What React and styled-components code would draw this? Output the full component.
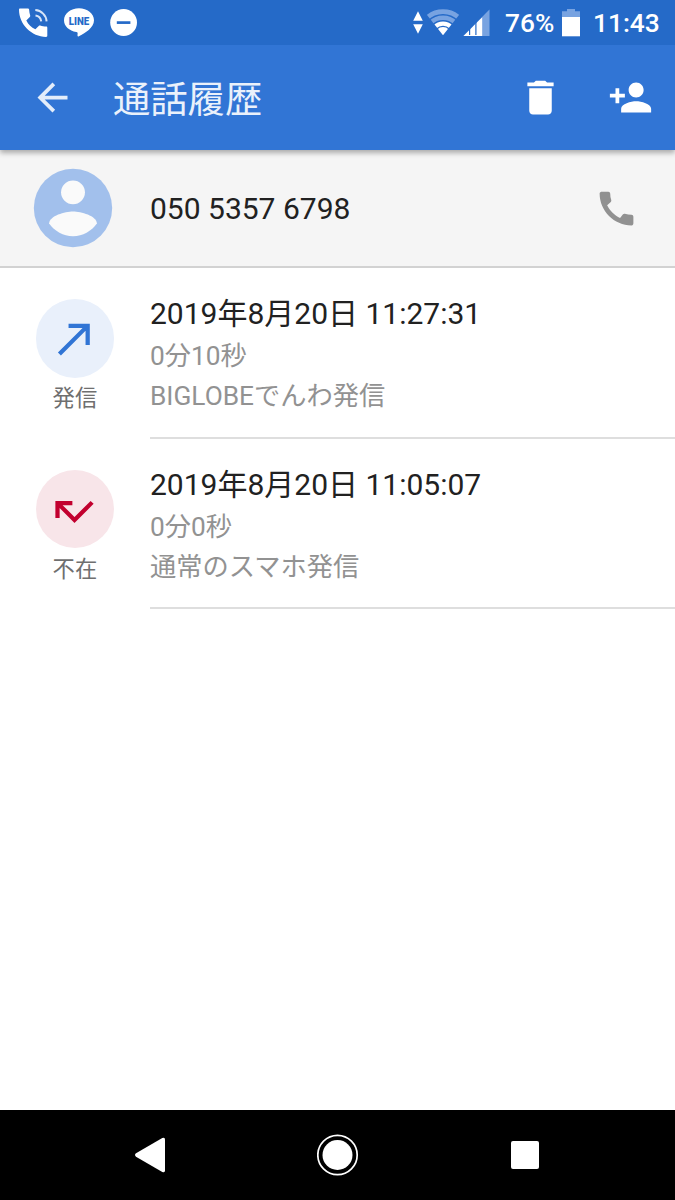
import React from "react";
import styled, { createGlobalStyle } from "styled-components";

const GlobalStyle = createGlobalStyle`
  * { box-sizing: border-box; }
  body {
    margin: 0;
    background: #fff;
    font-family: Roboto, "Noto Sans CJK JP", sans-serif;
  }
  svg { display: block; flex: none; }
`;

const Screen = styled.div`
  display: flex;
  flex-direction: column;
  width: 675px;
  height: 1200px;
  overflow: hidden;
  background: #fff;
`;

const StatusBar = styled.header`
  display: flex;
  justify-content: space-between;
  flex: none;
  height: 45px;
  padding: 0 15px 0 18px;
  background: #256ac8;
  color: #fff;
`;

const StatusGroup = styled.div`
  display: flex;
  align-items: center;
  gap: ${(p) => p.$gap}px;
`;

const StatusText = styled.span`
  width: ${(p) => p.$width}px;
  margin-left: ${(p) => p.$before}px;
  font-size: 26.3px;
  font-weight: 500;
  line-height: 45px;
  padding-top: 2px;
  white-space: nowrap;
`;

const AppBar = styled.nav`
  position: relative;
  display: flex;
  align-items: center;
  flex: none;
  height: 105px;
  padding-left: 30px;
  background: #3175d5;
  box-shadow: 0 3px 5px rgba(0, 0, 0, 0.3);
  clip-path: inset(0 0 -12px 0);
  color: #fff;
  z-index: 1;
`;

const IconButton = styled.button`
  display: flex;
  align-items: center;
  justify-content: center;
  width: ${(p) => p.$width || 90}px;
  height: 90px;
  padding: 0;
  border: 0;
  background: none;
  color: ${(p) => p.$color || "#fff"};
`;

const Title = styled.h1`
  flex: 1;
  margin: 0 0 0 38px;
  padding-top: 4px;
  font-size: 37.3px;
  font-weight: 400;
  line-height: 56px;
  color: #eaf1fb;
`;

const Contact = styled.section`
  display: flex;
  align-items: center;
  flex: none;
  height: 118px;
  padding: 0 36px 0 26px;
  border-bottom: 2px solid #d2d2d2;
  background: #f5f5f5;
`;

const PhoneNumber = styled.div`
  flex: 1;
  margin-left: 30px;
  padding-top: 2px;
  font-size: 30px;
  line-height: 40px;
  color: #212121;
`;

const CallList = styled.main`
  flex: 1;
`;

const CallRow = styled.article`
  display: flex;
  height: 170.6px;
  padding-left: 35.6px;
`;

const CallKind = styled.div`
  display: flex;
  flex-direction: column;
  align-items: center;
  width: 78.6px;
  padding-top: 31.3px;
`;

const KindBadge = styled.div`
  display: flex;
  align-items: center;
  justify-content: center;
  width: 78.6px;
  height: 78.6px;
  border-radius: 50%;
  background: ${(p) => (p.$missed ? "#f8e5e9" : "#e9f0fb")};
  color: ${(p) => (p.$missed ? "#c2002f" : "#3175d5")};
  padding-top: ${(p) => (p.$missed ? 4 : 0)}px;
`;

const KindLabel = styled.div`
  margin-top: 3.5px;
  font-size: 22.3px;
  line-height: 34px;
  color: #6f6f6f;
`;

const CallDetails = styled.div`
  flex: 1;
  margin-left: 35.8px;
  padding-top: 26px;
  border-bottom: 2px solid #dedede;
`;

const CallTime = styled.div`
  padding-bottom: 2px;
  font-size: 30px;
  line-height: 40px;
  color: #212121;
`;

const CallMeta = styled.div`
  font-size: 26.25px;
  line-height: 40px;
  color: #929292;
`;

const NavBar = styled.footer`
  display: flex;
  align-items: center;
  justify-content: center;
  gap: 97.5px;
  flex: none;
  height: 90px;
  background: #000;
`;

const Icon = ({ size = 45, children }) => (
  <svg width={size} height={size} viewBox="0 0 24 24" fill="currentColor">
    {children}
  </svg>
);

const HANDSET =
  "M20.01 15.38c-1.23 0-2.42-.2-3.53-.56-.35-.12-.74-.03-1.01.24l-1.57 1.97c-2.83-1.35-5.48-3.9-6.89-6.83l1.95-1.66c.27-.28.35-.67.24-1.02-.37-1.11-.56-2.3-.56-3.53 0-.54-.45-.99-.99-.99H4.19C3.65 3 3 3.24 3 3.99 3 13.28 10.73 21 20.01 21c.71 0 .99-.63.99-1.18v-3.45c0-.54-.45-.99-.99-.99z";

const VoiceCallIcon = () => (
  <svg width="31" height="45" viewBox="0 0 31 45" fill="#fff">
    <path d="M2 8.400h8c.6 0 1 .4 1.100 1 .2 2.200.5 4.200 1.100 6 .2.600 0 1.100-.4 1.500l-3.500 3.500c2.300 4.300 4.900 6.800 9.100 8.900l3.300-3.300c.5-.5 1-.6 1.600-.4 1.800.6 3.600.9 6 1 .6 0 1 .5 1 1.100v8c0 .7-.5 1.200-1.200 1.200C13.500 36.900 1 24.600 1 9.600c0-.7.400-1.200 1-1.200z" />
    <path d="M17.500 15.600a6.800 6.800 0 0 1 5.700 5.700M17.300 10.100a12 12 0 0 1 11.300 11.300" fill="none" stroke="#d6e4f8" strokeWidth="2" />
  </svg>
);

const LineIcon = () => (
  <svg width="30" height="45" viewBox="0 0 30 45">
    <path d="M15 8.200C6.800 8.200 0 13.600 0 20.200c0 5.900 5.200 10.700 12.300 11.700 1.500.3 1.400.8 1.300 2.100-.2 1.500-.2 2.900 1.300 2.200C21 33.100 30 27.800 30 20.200c0-6.600-6.800-12-15-12z" fill="#fff" />
    <text x="4.800" y="24.800" fontFamily="Roboto, sans-serif" fontWeight="900" fontSize="10.500" textLength="20.500" lengthAdjust="spacingAndGlyphs" fill="#256ac8">LINE</text>
  </svg>
);

const DoNotDisturbIcon = () => (
  <svg width="28" height="45" viewBox="0 0 28 45">
    <circle cx="14.600" cy="22.500" r="13.400" fill="#fff" />
    <path d="M7.800 22.600h13.600" stroke="#256ac8" strokeWidth="2.700" />
  </svg>
);

const TrafficIcon = () => (
  <svg width="10" height="45" viewBox="0 0 10 45" fill="#fff">
    <path d="M5 11.300 9.800 20.800H.2zM5 33.700.2 24.200h9.600z" />
  </svg>
);

const WifiIcon = () => (
  <svg width="32" height="45" viewBox="0 0 32 45">
    <defs>
      <clipPath id="wifiCone">
        <path d="M16 35.300-.8 14V5h33.600v9z" />
      </clipPath>
    </defs>
    <g clipPath="url(#wifiCone)" fill="none">
      <circle cx="16" cy="35.300" r="23.700" stroke="#78a3e1" strokeWidth="4.800" />
      <circle cx="16" cy="35.300" r="17.600" stroke="#78a3e1" strokeWidth="4.600" />
      <circle cx="16" cy="35.300" r="11.700" stroke="#fff" strokeWidth="4.200" />
      <circle cx="16" cy="35.300" r="8.200" fill="#fff" />
    </g>
  </svg>
);

const SignalIcon = () => (
  <svg width="27" height="45" viewBox="0 0 27 45">
    <path d="M19.300 16.800 26.500 9.500V36h-7.200z" fill="#78a3e1" />
    <path d="M.4 36 19.300 17V36z" fill="#fff" />
    <path d="M6.600 28v7M12.900 22v13" stroke="#256ac8" strokeWidth="1.200" />
  </svg>
);

const BatteryIcon = () => (
  <svg width="18" height="45" viewBox="0 0 18 45">
    <path d="M0 11.200h5V9h8v2.200h5v6H0z" fill="#78a3e1" />
    <path d="M0 17h18v19.300H0z" fill="#fff" />
  </svg>
);

const OutgoingIcon = () => (
  <Icon size={51}>
    <path d="M9.200 5v2h6.590L4.200 18.590 5.610 20 17.200 8.410V15h2V5z" />
  </Icon>
);

const MissedIcon = () => (
  <Icon size={51}>
    <path d="M19.590 7 12 14.590 6.410 9H11V7H3v8h2v-4.590l7 7 9-9z" />
  </Icon>
);

const CALLS = [
  { time: "2019年8月20日 11:27:31", duration: "0分10秒", via: "BIGLOBEでんわ発信", label: "発信", missed: false },
  { time: "2019年8月20日 11:05:07", duration: "0分0秒", via: "通常のスマホ発信", label: "不在", missed: true },
];

export default function App() {
  return (
    <Screen lang="ja">
      <GlobalStyle />
      <StatusBar>
        <StatusGroup $gap={15}>
          <VoiceCallIcon />
          <LineIcon />
          <DoNotDisturbIcon />
        </StatusGroup>
        <StatusGroup $gap={4}>
          <TrafficIcon />
          <WifiIcon />
          <SignalIcon />
          <StatusText $width={53} $before={11}>76%</StatusText>
          <BatteryIcon />
          <StatusText $width={67} $before={9}>11:43</StatusText>
        </StatusGroup>
      </StatusBar>
      <AppBar>
        <IconButton $width={45} $color="#e3edfa" aria-label="戻る">
          <Icon>
            <path d="M20 11H7.830l5.590-5.590L12 4l-8 8 8 8 1.410-1.410L7.830 13H20v-2z" />
          </Icon>
        </IconButton>
        <Title>通話履歴</Title>
        <IconButton aria-label="削除">
          <Icon>
            <path d="M6 19c0 1.100.9 2 2 2h8c1.100 0 2-.9 2-2V7H6v12zM19 4h-3.500l-1-1h-5l-1 1H5v2h14V4z" />
          </Icon>
        </IconButton>
        <IconButton aria-label="連絡先に追加">
          <Icon>
            <path d="M15 12c2.210 0 4-1.790 4-4s-1.790-4-4-4-4 1.790-4 4 1.790 4 4 4zm-9-2V7H4v3H1v2h3v3h2v-3h3v-2H6zm9 4c-2.670 0-8 1.340-8 4v2h16v-2c0-2.660-5.330-4-8-4z" />
          </Icon>
        </IconButton>
      </AppBar>
      <Contact>
        <svg width="94" height="94" viewBox="0 0 24 24">
          <circle cx="12" cy="12" r="10" fill="#a2c0ec" />
          <circle cx="12" cy="8" r="3.050" fill="#fafafa" />
          <path d="M12 19.200c-2.500 0-4.710-1.280-6.100-3.220.03-1.990 4.100-3.080 6.100-3.080s6.070 1.090 6.100 3.080c-1.390 1.940-3.600 3.220-6.100 3.220z" fill="#fafafa" />
        </svg>
        <PhoneNumber>050 5357 6798</PhoneNumber>
        <IconButton $width={45} $color="#919191" aria-label="発信">
          <Icon>
            <path d={HANDSET} />
          </Icon>
        </IconButton>
      </Contact>
      <CallList>
        {CALLS.map((call) => (
          <CallRow key={call.time}>
            <CallKind>
              <KindBadge $missed={call.missed}>
                {call.missed ? <MissedIcon /> : <OutgoingIcon />}
              </KindBadge>
              <KindLabel>{call.label}</KindLabel>
            </CallKind>
            <CallDetails>
              <CallTime>{call.time}</CallTime>
              <CallMeta>{call.duration}</CallMeta>
              <CallMeta>{call.via}</CallMeta>
            </CallDetails>
          </CallRow>
        ))}
      </CallList>
      <NavBar>
        <IconButton aria-label="戻る">
          <svg width="30" height="36" viewBox="0 0 30 36" fill="#fff">
            <path d="M1 16.300 27.300 1.100Q30 0 30 2.500v31q0 2.500-2.700 1.400L1 19.700Q-1 18 1 16.300z" />
          </svg>
        </IconButton>
        <IconButton aria-label="ホーム">
          <svg width="42" height="42" viewBox="0 0 42 42">
            <circle cx="20.500" cy="21" r="19.700" fill="none" stroke="#fff" strokeWidth="1.700" />
            <circle cx="20.500" cy="21" r="15" fill="#fff" />
          </svg>
        </IconButton>
        <IconButton aria-label="履歴">
          <svg width="28" height="28" viewBox="0 0 28 28">
            <rect width="28" height="28" rx="2" fill="#fff" />
          </svg>
        </IconButton>
      </NavBar>
    </Screen>
  );
}
